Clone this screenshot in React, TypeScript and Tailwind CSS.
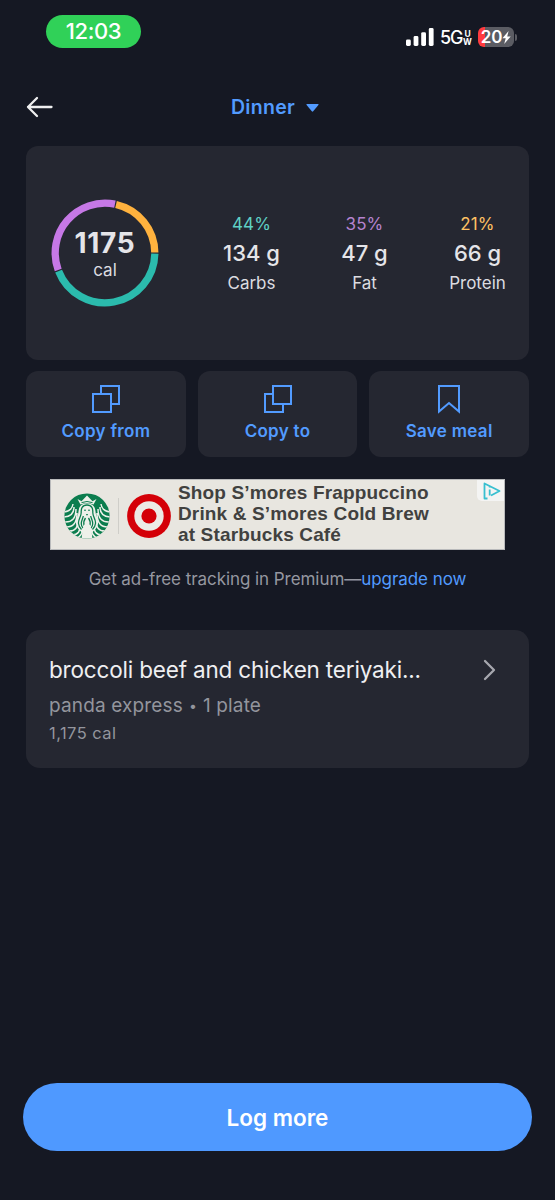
import type { ReactNode } from "react";

const RING = 49.8;
const polar = (deg: number) => {
  const a = (deg * Math.PI) / 180;
  return `${(54 + RING * Math.cos(a)).toFixed(2)} ${(54 + RING * Math.sin(a)).toFixed(2)}`;
};
const arc = (from: number, to: number) =>
  `M${polar(from)}A${RING} ${RING} 0 ${to - from > 180 ? 1 : 0} 1 ${polar(to)}`;

function StatusBar() {
  return (
    <div className="flex items-start justify-between pt-[15px] pr-[38px] pl-[46px]">
      <div className="flex h-[33px] w-[95px] items-center justify-center rounded-full bg-[#30d158] text-[22px] font-medium text-white">
        <span className="tracking-[-0.4px]">12:03</span>
      </div>
      <div className="mt-3 flex h-5 items-center text-white">
        <svg width="28" height="18" viewBox="0 0 28 18" fill="currentColor" className="mr-[6px]">
          <rect x="0" y="11.5" width="4.8" height="6.5" rx="1.4" />
          <rect x="7.6" y="8" width="4.8" height="10" rx="1.4" />
          <rect x="15.2" y="4.2" width="4.8" height="13.8" rx="1.4" />
          <rect x="22.8" y="0" width="4.8" height="18" rx="1.4" />
        </svg>
        <span className="w-[23px] pt-[2px] text-[18px] leading-5 font-medium tracking-[-1.2px]">5G</span>
        <span className="mr-[6px] flex w-[9px] flex-col items-center pt-px text-[8.5px] leading-[8px] font-bold">
          <span>U</span>
          <span>W</span>
        </span>
        <span className="flex h-5 w-9 items-center justify-center rounded-[6px] bg-linear-to-r from-[#ff3b3f] from-20% to-[#5b5c63] to-20%">
          <span className="text-[17px] leading-5 font-semibold tracking-[-0.2px]">20</span>
          <svg width="9" height="13" viewBox="0 0 9 13" fill="currentColor">
            <path d="M6.6 0 .4 7.3h3.3L2.2 13 8.7 5.5H5.2z" />
          </svg>
        </span>
        <span className="ml-px h-[7px] w-[2px] rounded-r-full bg-[#5b5c63]" />
      </div>
    </div>
  );
}

function Macro({ pct, grams, name, color, width }: { pct: string; grams: string; name: string; color: string; width: string }) {
  return (
    <div className={`flex flex-col items-center whitespace-nowrap ${width}`}>
      <span className={`text-[17px] leading-[26px] tracking-[0.1px] ${color}`}>{pct}</span>
      <span className="text-[22px] leading-[33px] font-medium text-[#e5e5e9]">{grams}</span>
      <span className="text-[17px] leading-[26px] text-[#dcdce0]">{name}</span>
    </div>
  );
}

function Action({ label, children }: { label: string; children: ReactNode }) {
  return (
    <button className="flex h-[86px] flex-1 flex-col items-center rounded-[12px] bg-[#252731] pt-[14px] text-[#529bff]">
      <svg width="30" height="30" viewBox="0 0 30 30" fill="none" stroke="currentColor" strokeWidth="2">
        {children}
      </svg>
      <span className="mt-1 text-[17px] leading-6 font-semibold tracking-[0.3px]">{label}</span>
    </button>
  );
}

function Siren() {
  return (
    <svg width="48" height="48" viewBox="0 0 48 48" fill="none">
      <clipPath id="badge">
        <circle cx="24" cy="24" r="22.6" />
      </clipPath>
      <g clipPath="url(#badge)">
        <rect width="48" height="48" fill="#0b7d4e" />
        <g stroke="#eef1ea" strokeWidth="1.5">
          <path d="M1 20q8-1 9-8M0 25q11 0 11-10M1 30q12 1 12-13M2 35q12 1 12-14M5 39q11 1 10-13M9 43q9 0 8-11M14 46q6-3 5-9" />
          <path d="M47 20q-8-1-9-8M48 25q-11 0-11-10M47 30q-12 1-12-13M46 35q-12 1-12-14M43 39q-11 1-10-13M39 43q-9 0-8-11M34 46q-6-3-5-9" />
        </g>
        <path d="M24 11.5c-6 0-8 3-8.5 8-.4 5-3 7-2.5 12 .4 4 3 6 6 9l5 6 5-6c3-3 5.6-5 6-9 .5-5-2.1-7-2.5-12-.5-5-2.5-8-8.5-8z" fill="#eef1ea" />
        <path d="m14.500 7 4 2.200L24 3.500l5.500 5.700 4-2.200-3 5.500q-6.500-3-13 0z" fill="#eef1ea" />
        <path d="M18.500 10.600q5.500-2.200 11 0" stroke="#0b7d4e" />
        <g stroke="#0b7d4e" strokeWidth="1.3">
          <path d="M24 13c-5 0-6 4-5.800 7.500.1 4-3.200 7-2.700 11 .3 2.500 1.500 4.500 3 6M24 13c5 0 6 4 5.800 7.500-.1 4 3.200 7 2.700 11-.3 2.500-1.500 4.500-3 6" />
          <path d="M20.300 24c-.5 3-2.300 5-2 8 .1 1.500.7 3 1.700 4M27.700 24c.5 3 2.300 5 2 8-.1 1.500-.7 3-1.700 4" />
          <path d="M22.500 26q-2.500 3.500-1.500 7.500M25.500 26q2.500 3.500 1.500 7.500" />
        </g>
        <path d="M21 18.200h2M25 18.200h2M23 22.700h2" stroke="#0b7d4e" strokeWidth="1" />
        <path d="M21 33q3-3 6 0l1.500 6 1 8h-11l1-8z" fill="#eef1ea" />
      </g>
    </svg>
  );
}

export default function App() {
  return (
    <main className="flex h-[1200px] w-full flex-col bg-[#151823] font-['Inter',sans-serif]">
      <StatusBar />

      <header className="mt-[38px] flex h-[42px] items-center justify-between px-[26px]">
        <svg width="28" height="22" viewBox="0 0 28 22" fill="none" stroke="#eeeeef" strokeWidth="2.3" strokeLinecap="round" strokeLinejoin="round">
          <path d="M25.500 11H2M11 2 2 11l9 9" />
        </svg>
        <button className="flex items-center gap-[11px] pt-px text-[19.5px] font-semibold tracking-[0.3px] text-[#529bff]">
          <span>Dinner</span>
          <svg width="13" height="8" viewBox="0 0 13 8" fill="currentColor">
            <path d="M1 0h11q1 0 .4 1L7.200 7.300q-.7.7-1.400 0L.6 1Q0 0 1 0z" />
          </svg>
        </button>
        <span className="w-[33px]" />
      </header>

      <section className="mx-[26px] mt-[18px] flex h-[214px] items-center rounded-[12px] bg-[#252731] pl-[25px]">
        <div className="grid size-[108px] place-items-center">
          <svg width="108" height="108" viewBox="0 0 108 108" fill="none" strokeWidth="7.3" className="col-start-1 row-start-1">
            <path d={arc(0.7, 158.7)} stroke="#2bbbad" />
            <path d={arc(160, 281.5)} stroke="#c678e6" />
            <path d={arc(282.8, 359.5)} stroke="#ffb23e" />
          </svg>
          <div className="col-start-1 row-start-1 flex flex-col items-center pt-[2px]">
            <span className="text-[28px] leading-[32px] font-bold tracking-[0.7px] text-[#e5e5e9]">1175</span>
            <span className="text-[17px] leading-[22px] text-[#dcdce0]">cal</span>
          </div>
        </div>
        <div className="ml-[54.5px] flex">
          <Macro pct="44%" grams="134 g" name="Carbs" color="text-[#5fd0c5]" width="w-[76px]" />
          <Macro pct="35%" grams="47 g" name="Fat" color="text-[#b583cf]" width="mx-[37px] w-[76px]" />
          <Macro pct="21%" grams="66 g" name="Protein" color="text-[#ffc163]" width="w-[76px]" />
        </div>
      </section>

      <div className="mx-[26px] mt-[11px] flex gap-3">
        <Action label="Copy from">
          <path d="M10 9V1h18v18h-8" />
          <path d="M2 9h18v18H2z" />
        </Action>
        <Action label="Copy to">
          <path d="M10 9H2v18h18v-8" />
          <path d="M10 1h18v18H10z" />
        </Action>
        <Action label="Save meal">
          <path d="M5 1h20v25.500l-10-8.500-10 8.500z" />
        </Action>
      </div>

      <section className="mx-[50px] mt-[22px] flex h-[71px] border border-[#b9babb] bg-[#e8e6e0] pl-3">
        <div className="flex items-center pt-[3px]">
          <Siren />
          <span className="mr-[8px] ml-[7px] h-9 w-px bg-[#cfcec9]" />
          <svg width="44" height="44" viewBox="0 0 44 44">
            <circle cx="22" cy="22" r="21.9" fill="#d40008" />
            <circle cx="22" cy="22" r="14.7" fill="#eceae5" />
            <circle cx="22" cy="22" r="7.6" fill="#d40008" />
          </svg>
        </div>
        <p className="ml-[7px] pt-[2px] font-['Liberation_Sans',sans-serif] text-[19px] leading-[21px] font-bold tracking-[0.15px] whitespace-nowrap text-[#41413f]">
          Shop S’mores Frappuccino
          <br />
          Drink &amp; S’mores Cold Brew
          <br />
          at Starbucks Café
        </p>
        <span className="ml-auto flex h-[21px] w-[27px] items-center justify-center rounded-bl-[5px] bg-[#f4f4f3]">
          <svg width="18" height="18" viewBox="0 0 18 18" fill="none" stroke="#37bfd0" strokeWidth="1.8" strokeLinejoin="round" className="ml-[3px]">
            <path d="M4.500 16.500H1.500v-15L16.500 9 8 13.500" />
            <path d="M6.700 7.500v6M6.700 4.500v1" />
          </svg>
        </span>
      </section>

      <p className="mt-[17px] text-center text-[17px] leading-6 tracking-[-0.06px] text-[#9597a0]">
        Get ad-free tracking in Premium—<a className="text-[#529bff]">upgrade now</a>
      </p>

      <section className="mx-[26px] mt-[39px] flex h-[138px] justify-between rounded-[14px] bg-[#252731] pr-[33px] pl-[23px]">
        <div className="flex flex-col pt-[23px] whitespace-nowrap">
          <h2 className="text-[22.5px] leading-[34px] tracking-[-0.18px] text-[#efeff1]">broccoli beef and chicken teriyaki...</h2>
          <p className="flex items-center gap-[6px] pt-px text-[19px] leading-[35px] tracking-[0.15px] text-[#93959d]">
            <span>panda express</span>
            <span className="w-2 text-center text-[14px]">•</span>
            <span>1 plate</span>
          </p>
          <p className="text-[16.5px] leading-[21px] tracking-[0.45px] text-[#93959d]">1,175 cal</p>
        </div>
        <svg width="13" height="22" viewBox="0 0 13 22" fill="none" stroke="#a6a7ae" strokeWidth="2.3" strokeLinecap="round" strokeLinejoin="round" className="mt-[29px]">
          <path d="M2 2l9 9-9 9" />
        </svg>
      </section>

      <button className="mx-[23px] mt-auto mb-[49px] h-[68px] shrink-0 rounded-full bg-[#4f99ff] pt-px text-[22.5px] font-semibold text-white">
        Log more
      </button>
    </main>
  );
}
